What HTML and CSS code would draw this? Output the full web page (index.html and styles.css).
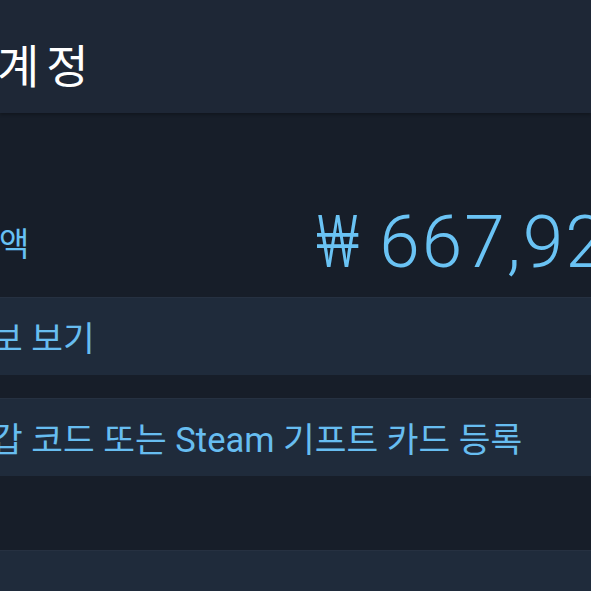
FILE: index.html
```html
<!DOCTYPE html>
<html>
    <head>
        <meta charset="UTF-8">
        <title>계정</title>
        <link rel="stylesheet" href="styles.css">
    </head>
    <body>
        <header class="top-bar">
            <h1 class="page-title">계정</h1>
        </header>

        <section class="wallet">
            <div class="balance">
                <span class="balance-label">액</span>
                <span class="balance-amount"><span class="currency">₩</span> 667,920</span>
            </div>
        </section>

        <nav class="links">
            <a class="link-row">보 보기</a>
            <a class="link-row">갑 코드 또는 Steam 기프트 카드 등록</a>
        </nav>

        <div class="links links-more">
            <a class="link-row"></a>
        </div>
    </body>
</html>
```

FILE: styles.css
```css
* {
	margin: 0;
	padding: 0;
	box-sizing: border-box;
}

body {
	background: #171e29;
	font-family: Roboto, "Noto Sans CJK KR", sans-serif;
	color: #67c1f5;
	overflow: hidden;
}

.top-bar {
	background: #1e2736;
	height: 113px;
	display: flex;
	align-items: center;
	padding-top: 13px;
	box-shadow: 0 2px 3px rgba(0, 0, 0, .25);
}

.page-title {
	color: #ffffff;
	font-family: "Noto Sans CJK KR", sans-serif;
	font-weight: 400;
	font-size: 46px;
	letter-spacing: 7px;
	text-indent: -3px;
}

.wallet {
	height: 184px;
	padding-top: 73px;
	display: flex;
	align-items: center;
}

.balance {
	display: flex;
	align-items: center;
	white-space: nowrap;
}

.balance-label {
	flex: 0 0 316px;
	font-size: 33px;
	text-indent: -1px;
}

.balance-amount {
	font-size: 73px;
	font-weight: 300;
	color: #6ac3f4;
	letter-spacing: 2px;
	word-spacing: -4px;
}

.currency {
	display: inline-block;
	transform: scaleX(.78);
	transform-origin: left center;
	margin-right: -10px;
}

.links {
	display: flex;
	flex-direction: column;
	gap: 23px;
}

.links-more {
	margin-top: 74px;
}

.link-row {
	display: flex;
	align-items: center;
	height: 78px;
	background: #1f2b3b;
	font-size: 34.5px;
	text-indent: -9px;
	white-space: nowrap;
	color: #67bdf0;
	box-shadow: inset 0 1px 0 rgba(255, 255, 255, .03);
}
```
